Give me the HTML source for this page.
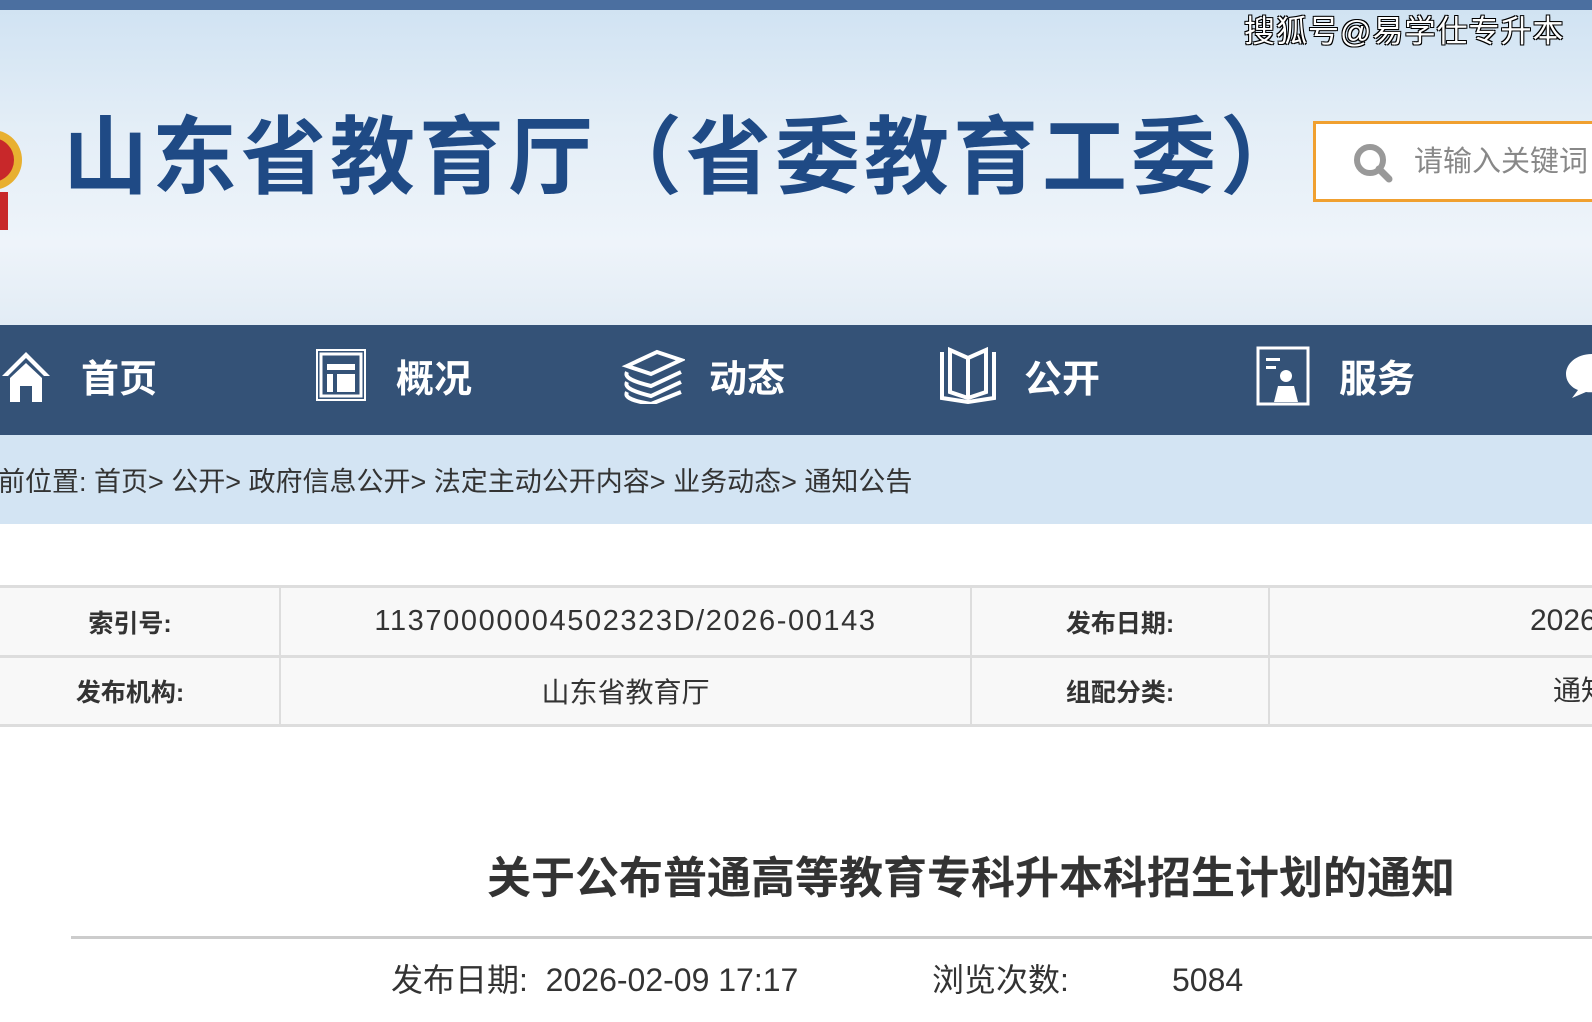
<!DOCTYPE html>
<html><head><meta charset="utf-8"><style>
*{margin:0;padding:0;box-sizing:border-box}
body{width:1592px;height:1022px;overflow:hidden;background:#fff;font-family:"Liberation Sans","Noto Sans CJK SC",sans-serif;position:relative}
.abs{position:absolute;white-space:nowrap}
.hdr{position:absolute;left:0;top:0;width:1592px;height:325px;background:linear-gradient(180deg,#cfe2f2 0%,#e4eef7 40%,#eef4fa 75%,#e2ecf5 100%)}
.top{position:absolute;left:0;top:0;width:1592px;height:10px;background:#4b6fa0}
.nav{position:absolute;left:0;top:325px;width:1592px;height:110px;background:#345277}
.nav .t{position:absolute;top:30px;color:#fff;font-size:38px;font-weight:bold;line-height:50px}
.bc{position:absolute;left:0;top:435px;width:1592px;height:89px;background:#d3e4f3}
.cell{position:absolute;display:flex;align-items:center;justify-content:center;font-size:28px;color:#333}
</style></head><body>
<div class="hdr"></div>
<div class="top"></div>
<svg class="abs" style="left:0;top:92px" width="26" height="140"><circle cx="-8" cy="68" r="30" fill="#e8b030"/><circle cx="-8" cy="68" r="22" fill="#c8282a"/><rect x="0" y="100" width="8" height="38" fill="#c8282a"/></svg>
<div class="abs" style="left:63px;top:104px;font-size:85px;font-weight:bold;color:#1f4a85;line-height:110px;letter-spacing:4px">山东省教育厅（省委教育工委）</div>
<div class="abs" style="left:1244px;top:12px;font-size:31px;color:#fff;text-shadow:1px 1px 0 #000,-1px -1px 0 #000,1px -1px 0 #000,-1px 1px 0 #000;line-height:40px;letter-spacing:1px">搜狐号@易学仕专升本</div>
<div class="abs" style="left:1313px;top:121px;width:320px;height:81px;border:3px solid #f0a030;background:#fff"></div>
<svg class="abs" style="left:1352px;top:142px" width="42" height="42"><circle cx="18" cy="18" r="13" fill="none" stroke="#999" stroke-width="6"/><line x1="27" y1="27" x2="37" y2="37" stroke="#999" stroke-width="7" stroke-linecap="round"/></svg>
<div class="abs" style="left:1414px;top:142px;font-size:29px;color:#888;line-height:40px">请输入关键词</div>
<div class="nav">
<svg class="abs" style="left:0;top:23px" width="52" height="56"><path d="M2 28 L26 4 L50 28 L44 28 L26 10 L8 28Z M10 30 L26 15 L42 30 L42 54 L32 54 L32 38 L20 38 L20 54 L10 54Z" fill="#fff"/></svg>
<div class="t" style="left:81px">首页</div>
<svg class="abs" style="left:313px;top:21px" width="54" height="56"><rect x="4" y="4" width="48" height="50" fill="none" stroke="#fff" stroke-width="2"/><rect x="8" y="8" width="40" height="42" fill="none" stroke="#fff" stroke-width="3"/><rect x="14" y="18" width="28" height="6" fill="#fff"/><rect x="14" y="28" width="6" height="18" fill="#fff"/><rect x="24" y="28" width="18" height="18" fill="#fff"/></svg>
<div class="t" style="left:396px">概况</div>
<svg class="abs" style="left:621px;top:21px" width="64" height="58"><g fill="none" stroke="#fff" stroke-width="4"><path d="M6 20 L36 6 L60 14 L30 28Z"/><path d="M6 26 C4 30 6 34 30 40 L60 26"/><path d="M6 36 C4 40 6 44 30 50 L60 36"/><path d="M6 46 C4 50 6 54 30 58 L60 46"/></g></svg>
<div class="t" style="left:709px">动态</div>
<svg class="abs" style="left:936px;top:21px" width="64" height="58"><g fill="none" stroke="#fff" stroke-width="4"><path d="M6 6 L6 52 L32 56 L58 52 L58 6"/><path d="M14 4 L14 46 L32 52 L50 46 L50 4 L32 12 Z"/><line x1="32" y1="12" x2="32" y2="52"/></g></svg>
<div class="t" style="left:1024px">公开</div>
<svg class="abs" style="left:1256px;top:21px" width="56" height="60"><g fill="none" stroke="#fff" stroke-width="3"><rect x="2" y="2" width="50" height="56"/></g><rect x="10" y="12" width="14" height="3" fill="#fff"/><rect x="10" y="20" width="10" height="3" fill="#fff"/><circle cx="30" cy="30" r="6" fill="#fff"/><path d="M18 56 L22 40 L38 40 L42 56Z" fill="#fff"/></svg>
<div class="t" style="left:1339px">服务</div>
<svg class="abs" style="left:1562px;top:25px" width="54" height="50"><path d="M30 4 C14 4 4 14 4 24 C4 32 10 38 16 40 L10 48 L24 42 C40 44 54 34 54 22 C54 12 44 4 30 4Z" fill="#fff"/></svg>
</div>
<div class="bc"></div>
<div class="abs" style="left:-2px;top:464px;font-size:27px;color:#333;line-height:36px">前位置: 首页&gt; 公开&gt; 政府信息公开&gt; 法定主动公开内容&gt; 业务动态&gt; 通知公告</div>
<div class="abs" style="left:0;top:585px;width:1592px;height:142px;background:#f8f8f8;border-top:3px solid #ddd;border-bottom:3px solid #ddd"></div>
<div class="abs" style="left:0;top:655px;width:1592px;height:3px;background:#ddd"></div>
<div class="abs" style="left:279px;top:588px;width:2px;height:136px;background:#ddd"></div>
<div class="abs" style="left:970px;top:588px;width:2px;height:136px;background:#ddd"></div>
<div class="abs" style="left:1268px;top:588px;width:2px;height:136px;background:#ddd"></div>
<div class="cell" style="left:0;top:588px;width:260px;height:67px;font-weight:bold;font-size:25px">索引号:</div>
<div class="cell" style="left:281px;top:588px;width:689px;height:67px;font-size:29px;letter-spacing:1.6px">11370000004502323D/2026-00143</div>
<div class="cell" style="left:972px;top:588px;width:296px;height:67px;font-weight:bold;font-size:25px">发布日期:</div>
<div class="abs" style="left:1530px;top:603px;font-size:30px;color:#333;line-height:36px">2026</div>
<div class="cell" style="left:0;top:658px;width:260px;height:66px;font-weight:bold;font-size:25px">发布机构:</div>
<div class="cell" style="left:281px;top:658px;width:689px;height:66px">山东省教育厅</div>
<div class="cell" style="left:972px;top:658px;width:296px;height:66px;font-weight:bold;font-size:25px">组配分类:</div>
<div class="abs" style="left:1553px;top:673px;font-size:28px;color:#333;line-height:36px">通知</div>
<div class="abs" style="left:487px;top:851px;font-size:44px;font-weight:bold;color:#333;line-height:56px">关于公布普通高等教育专科升本科招生计划的通知</div>
<div class="abs" style="left:71px;top:936px;width:1521px;height:3px;background:#ccc"></div>
<div class="abs" style="left:391px;top:960px;font-size:32px;color:#333;line-height:40px">发布日期:&nbsp; 2026-02-09 17:17</div>
<div class="abs" style="left:932px;top:960px;font-size:32px;color:#333;line-height:40px">浏览次数:</div>
<div class="abs" style="left:1172px;top:960px;font-size:32px;color:#333;line-height:40px">5084</div>
</body></html>
